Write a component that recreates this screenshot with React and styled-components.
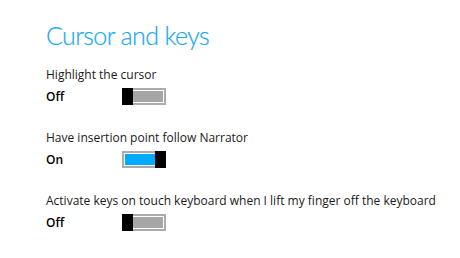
import React from 'react';
import styled, { createGlobalStyle } from 'styled-components';

const GlobalStyle = createGlobalStyle`
  html, body {
    margin: 0;
    padding: 0;
    background: #ffffff;
  }
  body {
    font-family: 'Open Sans', 'Noto Sans', sans-serif;
    color: #000;
  }
`;

const Page = styled.div`
  width: 460px;
  height: 258px;
  box-sizing: border-box;
  padding: 19px 0 0 46px;
  overflow: hidden;
`;

const Title = styled.h1`
  margin: 0 0 14px;
  font-family: Lato, 'Open Sans', sans-serif;
  font-weight: 300;
  font-size: 25px;
  line-height: 33px;
  color: #1aaaf2;
  letter-spacing: -0.6px;
  -webkit-text-stroke: 0.2px #1aaaf2;
`;

const Setting = styled.div`
  display: flex;
  flex-direction: column;
  margin-bottom: 24px;
`;

const Label = styled.div`
  font-size: 12px;
  line-height: 18px;
  color: #1a1a1a;
`;

const Row = styled.div`
  display: flex;
  align-items: center;
  margin-top: 4px;
`;

const State = styled.div`
  width: 76px;
  font-size: 12px;
  font-weight: 600;
  color: #000;
`;

const Track = styled.div`
  position: relative;
  width: 44px;
  height: 17px;
  box-sizing: border-box;
  border: 2px solid #ababab;
  padding: 1px;
  background: #fff;
`;

const Fill = styled.div`
  width: 100%;
  height: 100%;
  background: ${(p) => (p.$on ? '#00aaff' : '#a6a6a6')};
`;

const Thumb = styled.div`
  position: absolute;
  top: -2px;
  bottom: -2px;
  width: 11px;
  background: #000;
  ${(p) => (p.$on ? 'right: -2px;' : 'left: -2px;')}
`;

function Toggle({ on }) {
  return (
    <Track>
      <Fill $on={on} />
      <Thumb $on={on} />
    </Track>
  );
}

const settings = [
  { label: 'Highlight the cursor', on: false },
  { label: 'Have insertion point follow Narrator', on: true },
  { label: 'Activate keys on touch keyboard when I lift my finger off the keyboard', on: false },
];

export default function App() {
  return (
    <>
      <GlobalStyle />
      <Page>
        <Title>Cursor and keys</Title>
        {settings.map((s) => (
          <Setting key={s.label}>
            <Label>{s.label}</Label>
            <Row>
              <State>{s.on ? 'On' : 'Off'}</State>
              <Toggle on={s.on} />
            </Row>
          </Setting>
        ))}
      </Page>
    </>
  );
}
